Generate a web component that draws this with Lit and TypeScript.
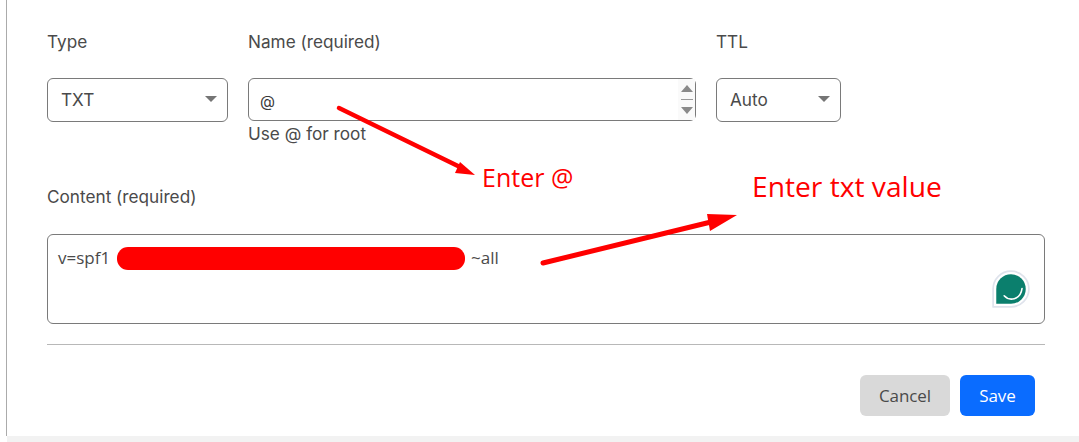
import { LitElement, html, css } from "lit";
import { customElement } from "lit/decorators.js";

@customElement("app-root")
export class AppRoot extends LitElement {
  static styles = css`
    :host {
      display: block;
      position: relative;
      width: 1079px;
      height: 442px;
      overflow: hidden;
      background: #fff;
      font-family: Inter, "Liberation Sans", sans-serif;
      color: #4a4a4a;
      font-size: 17.2px;
    }
    .panel {
      box-sizing: border-box;
      height: 436px;
      margin-left: 6px;
      border-left: 1px solid #ababab;
      padding: 32px 34px 0 40px;
      display: flex;
      flex-direction: column;
    }
    .band {
      height: 6px;
      margin-left: 7px;
      background: #f2f2f2;
    }
    .row {
      display: flex;
      gap: 20px;
      height: 155px;
    }
    .field {
      display: flex;
      flex-direction: column;
    }
    .type { width: 181px; }
    .name { width: 448px; }
    .ttl { width: 125px; }
    label {
      display: block;
      height: 20px;
      line-height: 20px;
      margin-bottom: 26px;
      white-space: nowrap;
    }
    .select, .input {
      box-sizing: border-box;
      border: 1px solid #7a7a7a;
      border-radius: 6px;
      display: flex;
      align-items: center;
    }
    .select {
      height: 44px;
      padding: 0 10px 2px 13px;
      justify-content: space-between;
    }
    .caret {
      width: 0;
      height: 0;
      border-left: 6.5px solid transparent;
      border-right: 6.5px solid transparent;
      border-top: 6.5px solid #757575;
    }
    .input {
      height: 43px;
      padding-left: 11px;
      justify-content: space-between;
      font-size: 15.5px;
    }
    .input .at { color: #3a3a3a; padding-top: 3px; }
    .spin {
      width: 17px;
      height: 41px;
      background: #fafafa;
      display: flex;
      flex-direction: column;
      align-items: center;
      justify-content: center;
      gap: 7px;
    }
    .spin i { display: block; width: 0; height: 0; border-left: 6px solid transparent; border-right: 6px solid transparent; }
    .spin .up { border-bottom: 7px solid #8a8a8a; }
    .spin .down { border-top: 7px solid #8a8a8a; }
    .spin b { display: block; width: 12px; height: 1px; background: #9a9a9a; }
    .hint {
      line-height: 20px;
      margin-top: 3px;
      white-space: nowrap;
    }
    .content-label { margin-bottom: 27px; }
    .textarea {
      box-sizing: border-box;
      position: relative;
      height: 90px;
      border: 1px solid #7a7a7a;
      border-radius: 6px;
      padding: 13px 10px;
      line-height: 20px;
      font-size: 17px;
      font-family: "Open Sans", "Noto Sans", sans-serif;
      color: #4a4a4a;
      display: flex;
    }
    .gap { width: 354px; flex: none; }
    .val1 { width: 59px; flex: none; white-space: nowrap; }
    .val2 { white-space: nowrap; }
    .grammarly {
      position: absolute;
      right: 13px;
      bottom: 14px;
      width: 40px;
      height: 40px;
    }
    hr {
      border: 0;
      height: 1px;
      background: #b8b8b8;
      margin: 20px 0 0;
      width: 100%;
    }
    .actions {
      display: flex;
      justify-content: flex-end;
      gap: 10px;
      padding-right: 10px;
      margin-top: 30px;
    }
    button {
      border: 0;
      height: 41px;
      border-radius: 6px;
      font-family: "Open Sans", "Noto Sans", sans-serif;
      font-size: 17px;
      padding: 0;
      letter-spacing: -0.1px;
    }
    .cancel { width: 90px; background: #d9d9d9; color: #4a4a4a; }
    .save { width: 75px; background: #0a6cff; color: #fff; }
    .overlay {
      position: absolute;
      left: 0;
      top: 0;
      width: 1079px;
      height: 442px;
      pointer-events: none;
    }
    .note {
      position: absolute;
      color: #ff0000;
      font-family: "Open Sans", "Noto Sans", sans-serif;
      white-space: nowrap;
      line-height: 1;
    }
    .note-at { left: 482px; top: 165px; font-size: 25px; }
    .note-txt { left: 752px; top: 172px; font-size: 28.2px; }
  `;

  render() {
    return html`
      <div class="panel">
        <div class="row">
          <div class="field type">
            <label>Type</label>
            <div class="select"><span>TXT</span><span class="caret"></span></div>
          </div>
          <div class="field name">
            <label>Name (required)</label>
            <div class="input">
              <span class="at">@</span>
              <span class="spin"><i class="up"></i><b></b><i class="down"></i></span>
            </div>
            <div class="hint">Use @ for root</div>
          </div>
          <div class="field ttl">
            <label>TTL</label>
            <div class="select"><span>Auto</span><span class="caret"></span></div>
          </div>
        </div>
        <label class="content-label">Content (required)</label>
        <div class="textarea">
          <span class="val1">v=spf1</span><span class="gap"></span><span class="val2">~all</span>
          <svg class="grammarly" viewBox="0 0 38 38">
            <path d="M2 36V19A17 17 0 1 1 19 36Z" fill="#fff" stroke="#dfe3ec" stroke-width="1.6" stroke-linejoin="round"/>
            <path d="M5 33V19A14 14 0 1 1 19 33Z" fill="#0b7f6d"/>
            <path d="M12.5 25.5C17 30.5 28 30 29.5 18.5" fill="none" stroke="#fff" stroke-width="1.5" stroke-linecap="round"/>
          </svg>
        </div>
        <hr />
        <div class="actions">
          <button class="cancel">Cancel</button>
          <button class="save">Save</button>
        </div>
      </div>
      <div class="band"></div>
      <svg class="overlay" viewBox="0 0 1079 442">
        <rect x="117" y="247" width="348" height="23" rx="11" fill="#ff0000"/>
        <line x1="339" y1="108" x2="460" y2="167" stroke="#ff0000" stroke-width="4.5" stroke-linecap="round"/>
        <polygon points="475,175 455,173 460,162" fill="#ff0000"/>
        <line x1="543" y1="263" x2="715" y2="221" stroke="#ff0000" stroke-width="5" stroke-linecap="round"/>
        <polygon points="737,215 707,214 710,231" fill="#ff0000"/>
      </svg>
      <span class="note note-at">Enter @</span>
      <span class="note note-txt">Enter txt value</span>
    `;
  }
}
